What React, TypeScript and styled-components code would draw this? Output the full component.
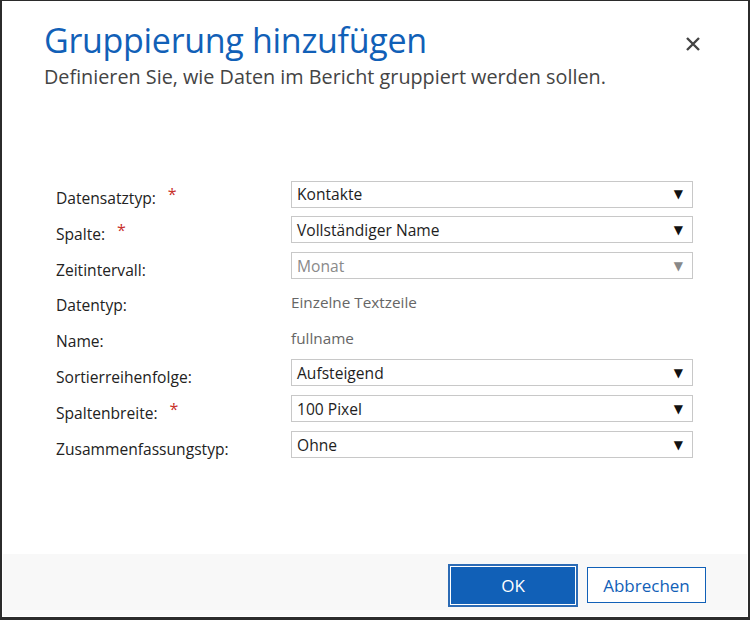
import React from 'react';
import styled, { createGlobalStyle } from 'styled-components';

const GlobalStyle = createGlobalStyle`
  html, body {
    margin: 0;
    padding: 0;
    background: #ffffff;
  }
  body {
    font-family: 'Open Sans', 'Noto Sans', Arial, sans-serif;
  }
`;

interface FieldRow {
  label: string;
  required?: boolean;
  kind: 'select' | 'text';
  value: string;
  disabled?: boolean;
}

const rows: FieldRow[] = [
  { label: 'Datensatztyp:', required: true, kind: 'select', value: 'Kontakte' },
  { label: 'Spalte:', required: true, kind: 'select', value: 'Vollständiger Name' },
  { label: 'Zeitintervall:', kind: 'select', value: 'Monat', disabled: true },
  { label: 'Datentyp:', kind: 'text', value: 'Einzelne Textzeile' },
  { label: 'Name:', kind: 'text', value: 'fullname' },
  { label: 'Sortierreihenfolge:', kind: 'select', value: 'Aufsteigend' },
  { label: 'Spaltenbreite:', required: true, kind: 'select', value: '100 Pixel' },
  { label: 'Zusammenfassungstyp:', kind: 'select', value: 'Ohne' },
];

export default function App() {
  return (
    <>
      <GlobalStyle />
      <Frame>
        <Content>
          <Header>
            <div>
              <Title>Gruppierung hinzufügen</Title>
              <Subtitle>Definieren Sie, wie Daten im Bericht gruppiert werden sollen.</Subtitle>
            </div>
            <CloseButton aria-label="Schließen">
              <svg width="16" height="16" viewBox="0 0 16 16">
                <path d="M2 2 L14 14 M14 2 L2 14" stroke="#444" strokeWidth="2.4" />
              </svg>
            </CloseButton>
          </Header>
          <Form>
            {rows.map((row) => (
              <Row key={row.label}>
                <Label>
                  {row.label}
                  {row.required && <Required>*</Required>}
                </Label>
                {row.kind === 'select' ? (
                  <SelectBox disabled={row.disabled}>
                    <span>{row.value}</span>
                    <Arrow disabled={row.disabled}>▼</Arrow>
                  </SelectBox>
                ) : (
                  <StaticValue>{row.value}</StaticValue>
                )}
              </Row>
            ))}
          </Form>
        </Content>
        <Footer>
          <PrimaryButton>OK</PrimaryButton>
          <SecondaryButton>Abbrechen</SecondaryButton>
        </Footer>
      </Frame>
    </>
  );
}

const Frame = styled.div`
  width: 750px;
  height: 620px;
  box-sizing: border-box;
  border: 2px solid #2b2b2b;
  border-top-width: 1px;
  border-bottom-width: 3px;
  padding: 1px;
  display: flex;
  flex-direction: column;
  background: #ffffff;
`;

const Content = styled.div`
  flex: 1;
  padding: 18px 0 0 41px;
`;

const Header = styled.div`
  display: flex;
  justify-content: space-between;
  align-items: flex-start;
  padding-right: 46px;
`;

const Title = styled.h1`
  margin: 0;
  font-family: 'Open Sans', sans-serif;
  font-weight: 400;
  font-size: 34px;
  line-height: 40px;
  color: #1160b7;
  letter-spacing: -0.3px;
`;

const Subtitle = styled.p`
  margin: 4px 0 0 0;
  font-size: 19.8px;
  line-height: 26px;
  color: #444444;
`;

const CloseButton = styled.button`
  margin-top: 16px;
  padding: 0;
  border: 0;
  background: none;
  display: flex;
  cursor: pointer;
`;

const Form = styled.div`
  margin-top: 89px;
  padding-left: 12px;
  display: flex;
  flex-direction: column;
  gap: 8.8px;
`;

const Row = styled.div`
  display: grid;
  grid-template-columns: 235px 402px;
  align-items: center;
  height: 27px;
`;

const Label = styled.div`
  font-size: 15.6px;
  color: #222222;
  padding-top: 8px;
`;

const Required = styled.span`
  color: #c8312b;
  margin-left: 12px;
  font-size: 16px;
  position: relative;
  top: -4px;
`;

const SelectBox = styled.div<{ disabled?: boolean }>`
  box-sizing: border-box;
  height: 27px;
  border: 1px solid #c8c8c8;
  background: #ffffff;
  display: flex;
  align-items: center;
  justify-content: space-between;
  padding: 0 9px 0 5px;
  font-size: 15.6px;
  color: ${({ disabled }) => (disabled ? '#8a8a8a' : '#1e1e1e')};
`;

const Arrow = styled.span<{ disabled?: boolean }>`
  font-size: 12px;
  font-family: 'DejaVu Sans', sans-serif;
  color: ${({ disabled }) => (disabled ? '#888888' : '#111111')};
`;

const StaticValue = styled.div`
  font-size: 15.3px;
  color: #666666;
  padding-top: 2px;
`;

const Footer = styled.div`
  height: 62px;
  background: #f8f8f8;
  display: flex;
  justify-content: flex-end;
  align-items: center;
  gap: 10px;
  padding-right: 41px;
`;

const PrimaryButton = styled.button`
  box-sizing: border-box;
  width: 128px;
  height: 41px;
  background: #1160b7;
  color: #ffffff;
  border: 2px solid #ffffff;
  outline: 1px solid #2c6bb5;
  outline-offset: -1px;
  box-shadow: 0 0 0 1px #2c6bb5;
  font-family: 'Open Sans', sans-serif;
  font-size: 17px;
  cursor: pointer;
`;

const SecondaryButton = styled.button`
  box-sizing: border-box;
  width: 119px;
  height: 36px;
  background: #ffffff;
  color: #1160b7;
  border: 1px solid #1160b7;
  font-family: 'Open Sans', sans-serif;
  font-size: 17px;
  cursor: pointer;
`;
